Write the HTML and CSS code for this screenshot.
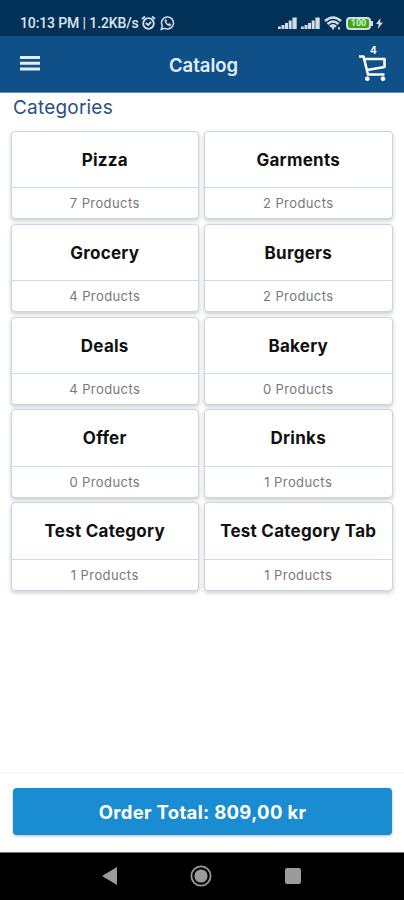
FILE: index.html
```
<!DOCTYPE html>
<html lang="en">
<head>
<meta charset="utf-8">
<title>Catalog</title>
<link rel="stylesheet" href="styles.css">
</head>
<body>
<div class="status">
  <span class="clock">10:13 PM | 1.2KB/s</span>
  <svg class="alarm" width="15" height="16" viewBox="0 0 15 16" fill="none" stroke="#d5dfec" stroke-width="1.8"><circle cx="7.500" cy="8.500" r="5.300"/><path d="M1 4L4 1.500M14 4L11 1.500M4.800 8l2.300 2 3-3"/></svg>
  <svg class="whats" width="15" height="16" viewBox="0 0 15 16" fill="none" stroke="#d5dfec" stroke-width="1.500"><path d="M1.300 14.300l1-3.400a6 6 0 1 1 2.500 2.400z"/><path d="M5 5c-.4 3 2.400 6 5.400 6l.5-1.800-1.800-.8-.9.800C7 8.700 6.300 7.900 6 7l.8-.9-.7-1.600z" fill="#d5dfec" stroke-width=".5"/></svg>
  <div class="signals">
    <svg width="19" height="12" viewBox="0 0 19 12" fill="#d5dce5"><path d="M0 9.500h2.800V12H0zM3.500 8h3v4h-3zM7 6h3v6H7zM10.700 3.500h3V12h-3zM14.400 .5h4.300V12h-4.300z"/></svg>
    <svg width="19" height="12" viewBox="0 0 19 12" fill="#d5dce5"><path d="M0 9.500h2.800V12H0zM3.500 8h3v4h-3zM7 6h3v6H7zM10.700 3.500h3V12h-3zM14.400 .5h4.300V12h-4.300z"/></svg>
    <svg width="18" height="14" viewBox="0 0 18 14" fill="none" stroke="#d5dce5" stroke-width="2.500"><path d="M1 5q8-7 16 0M3.500 8q5.500-5 11 0M6 10.700q3-2.600 6 0"/><path d="M9 10.500v3" stroke-width="2"/><path d="M15 11v2.500" stroke="#a9cbb8" stroke-width="2"/></svg>
    <div class="battery"><span>100</span></div>
    <svg class="bolt" width="7" height="11" viewBox="0 0 7 11" fill="#d5dce5"><path d="M4.500 0L0 6h2.700L1.800 11 7 4.400H4z"/></svg>
  </div>
</div>
<header class="bar">
  <svg class="menu" width="20" height="15" viewBox="0 0 20 15" fill="#e3ecf7"><path d="M0 0h20v3H0zM0 5.800h20v3H0zM0 11.600h20v3H0z"/></svg>
  <h1>Catalog</h1>
  <div class="cart">
    <span class="count">4</span>
    <svg width="29" height="27" viewBox="0 0 29 27" fill="none" stroke="#fff" stroke-width="2.600" stroke-linejoin="round"><path d="M1 1.500h4.500L10 19.500H26.500M6 4H26.500V12L9 15"/><circle cx="9.300" cy="23.700" r="1.900" fill="#fff" stroke-width="1"/><circle cx="25" cy="23.700" r="1.900" fill="#fff" stroke-width="1"/></svg>
  </div>
</header>
<main>
  <h2>Categories</h2>
  <div class="grid">
    <article class="card"><h3>Pizza</h3><p>7 Products</p></article>
    <article class="card"><h3>Garments</h3><p>2 Products</p></article>
    <article class="card"><h3>Grocery</h3><p>4 Products</p></article>
    <article class="card"><h3>Burgers</h3><p>2 Products</p></article>
    <article class="card"><h3>Deals</h3><p>4 Products</p></article>
    <article class="card"><h3>Bakery</h3><p>0 Products</p></article>
    <article class="card"><h3>Offer</h3><p>0 Products</p></article>
    <article class="card"><h3>Drinks</h3><p>1 Products</p></article>
    <article class="card"><h3>Test Category</h3><p>1 Products</p></article>
    <article class="card"><h3>Test Category Tab</h3><p>1 Products</p></article>
  </div>
</main>
<footer class="order"><button>Order Total: 809,00 kr</button></footer>
<nav class="system">
  <svg width="15" height="18" viewBox="0 0 15 18" fill="#9b9b9b"><path d="M15 0v18L0 9z"/></svg>
  <svg width="22" height="22" viewBox="0 0 22 22" fill="#9b9b9b"><circle cx="11" cy="11" r="9.600" fill="none" stroke="#9b9b9b" stroke-width="1.800"/><circle cx="11" cy="11" r="6.600"/></svg>
  <svg width="16" height="16" viewBox="0 0 16 16" fill="#9b9b9b"><rect width="16" height="16" rx="2"/></svg>
</nav>
</body>
</html>
```
FILE: styles.css
```
* { box-sizing: border-box; }
body {
  margin: 0;
  height: 900px;
  display: flex;
  flex-direction: column;
  overflow: hidden;
  background: #fff;
  font-family: Inter, "Liberation Sans", sans-serif;
}
h1, h2, h3, p { margin: 0; }
svg { display: block; flex: none; }
.status {
  height: 36px;
  padding: 10px 21px 0 20px;
  display: flex;
  align-items: center;
  background: #023158;
  color: #dce5f0;
}
.clock {
  font: 500 14px/24px Roboto, sans-serif;
  letter-spacing: -0.12px;
  white-space: nowrap;
  width: 121px;
}
.whats { margin-left: 4px; }
.signals { margin-left: auto; display: flex; align-items: center; gap: 4px; }
.battery {
  position: relative;
  width: 25px;
  height: 13px;
  border: 2px solid #d5dce5;
  border-radius: 4px;
  background: #39a91b;
  color: #d5f5cd;
  font: 700 9px/9px Roboto, sans-serif;
  text-align: center;
}
.battery::after {
  content: "";
  position: absolute;
  right: -4px;
  top: 2px;
  width: 2px;
  height: 5px;
  background: #d5dce5;
}
.bolt { margin-left: 1px; }
.bar {
  height: 57px;
  padding: 0 17px 0 20px;
  display: grid;
  grid-template-columns: 29px 1fr 29px;
  align-items: center;
  background: #0e5087;
  border-bottom: 1px solid #6d8fb2;
}
h1 {
  font-size: 18.500px;
  font-weight: 600;
  line-height: 24px;
  color: #e3edfb;
  text-align: center;
  padding-top: 1px;
}
.menu { margin-bottom: 1px; }
.cart { height: 56px; padding-top: 9px; display: flex; flex-direction: column; align-items: center; }
.count { font-size: 10px; line-height: 10px; font-weight: 700; color: #fff; margin-left: 2px; }
main { flex: 1; padding: 0 10.500px; }
h2 {
  height: 37.800px;
  padding: 3px 0 0 2.500px;
  font-size: 19px;
  line-height: 24px;
  font-weight: 400;
  letter-spacing: .2px;
  color: #2b4f87;
}
.grid {
  display: grid;
  grid-template-columns: 188.500px 188.500px;
  gap: 4.200px 5px;
}
.card {
  height: 88.700px;
  border: 1px solid #c8d5e5;
  border-radius: 4px;
  background: #fff;
  box-shadow: 0 2px 4px rgba(0, 0, 0, .2);
  text-align: center;
}
h3 {
  height: 56.500px;
  border-bottom: 1px solid #ccd9ea;
  font-size: 17px;
  line-height: 57px;
  font-weight: 700;
  letter-spacing: .25px;
  color: #111;
  white-space: nowrap;
}
p { font-size: 13px; line-height: 31px; letter-spacing: .4px; color: #777; }
.order {
  height: 80px;
  padding: 14px 12px 0 13px;
  border-top: 2px solid #f8f8f8;
}
button {
  display: block;
  width: 100%;
  height: 47px;
  border: 0;
  border-radius: 4px;
  background: #198cd2;
  box-shadow: 0 1px 3px rgba(0, 0, 0, .3);
  color: #fff;
  font: 700 18.500px/47px Inter, sans-serif;
  letter-spacing: .32px;
  padding: 1px 0 0;
}
.system {
  height: 48px;
  padding: 0 2px 2px 0;
  border-top: 1px solid #777;
  background: #000;
  display: flex;
  align-items: center;
  justify-content: center;
  gap: 73px;
}
```
